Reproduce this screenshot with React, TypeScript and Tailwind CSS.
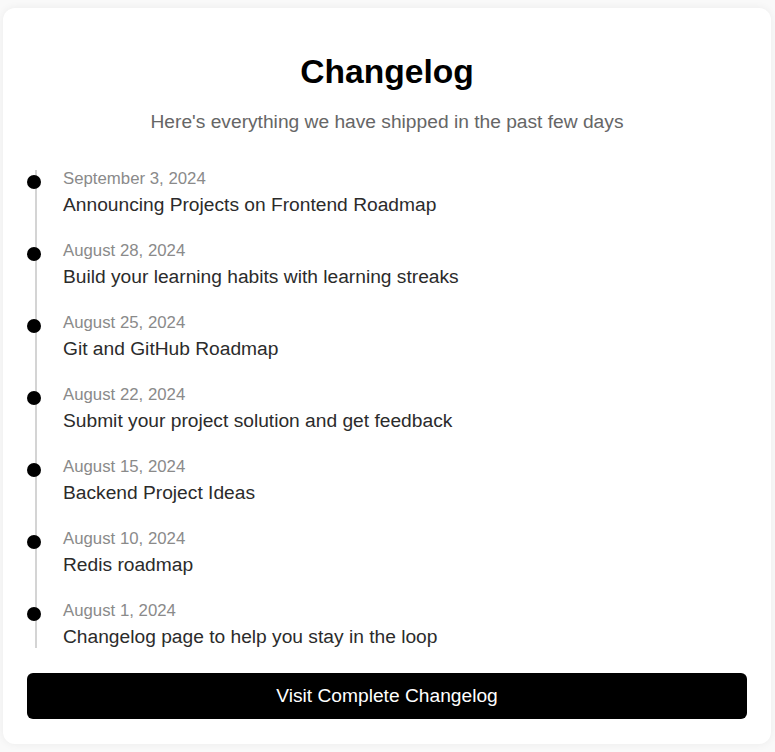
import React from 'react';

const entries = [
  { date: 'September 3, 2024', title: 'Announcing Projects on Frontend Roadmap' },
  { date: 'August 28, 2024', title: 'Build your learning habits with learning streaks' },
  { date: 'August 25, 2024', title: 'Git and GitHub Roadmap' },
  { date: 'August 22, 2024', title: 'Submit your project solution and get feedback' },
  { date: 'August 15, 2024', title: 'Backend Project Ideas' },
  { date: 'August 10, 2024', title: 'Redis roadmap' },
  { date: 'August 1, 2024', title: 'Changelog page to help you stay in the loop' },
];

export default function App() {
  return (
    <div className="min-h-screen bg-[#f9f9f9] pt-2 font-['Liberation_Sans',Arial,sans-serif]">
      <div className="ml-[3px] w-[768px] rounded-xl bg-white px-6 pt-6 pb-[25px] shadow-[0_0_8px_rgba(0,0,0,0.06)]">
        {/* Header */}
        <div className="mt-5 text-center">
          <h1 className="text-[33.6px] font-bold leading-10 text-black">Changelog</h1>
          <p className="mt-4 text-[19.2px] leading-7 text-[#666]">
            Here's everything we have shipped in the past few days
          </p>
        </div>

        {/* Timeline */}
        <div className="relative mt-[30px]">
          <div className="absolute left-2 top-1 bottom-[3px] w-0.5 bg-[#d4d4d4]" />
          {entries.map((entry) => (
            <div key={entry.date} className="relative pb-[19px] pl-9 last:pb-0">
              <span className="absolute left-0 top-[9px] h-3.5 w-3.5 rounded-full bg-black" />
              <div className="text-[16.8px] leading-[25px] text-[#8a8a8a]">{entry.date}</div>
              <div className="text-[19.2px] leading-7 text-[#2b2b2b]">{entry.title}</div>
            </div>
          ))}
        </div>

        <button className="mt-[22px] h-[46px] w-full rounded-md bg-black text-[19.2px] text-white">
          Visit Complete Changelog
        </button>
      </div>
    </div>
  );
}
